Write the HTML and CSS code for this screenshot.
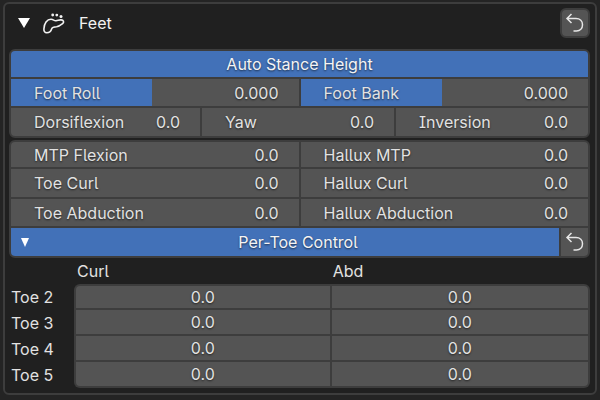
FILE: index.html
```html
<!DOCTYPE html>
<html lang="en">
<head>
<meta charset="utf-8">
<title>Feet</title>
<link rel="stylesheet" href="styles.css">
</head>
<body>
<section class="panel">
  <header class="panel-header">
    <button class="disclosure" type="button" aria-expanded="true">
      <svg class="triangle" viewBox="0 0 12 10" aria-hidden="true"><path d="M0 0H12L6 10Z"/></svg>
      <svg class="foot" viewBox="0 0 24 24" aria-hidden="true">
        <path d="M4.800 21.800C2.600 21.800 1.800 20 1.900 18C2.100 12.500 5 8.300 9 8.300C11.500 8.300 12 9.900 14 9.700C16 9.500 17 8.800 19 8.900C21.800 9.100 22.300 11.300 20.600 12.700C18.500 14.400 16.800 15.600 14.500 15.700C12.200 15.700 10.300 16 9.600 18C8.900 20.200 7.500 21.800 4.800 21.800Z"/>
        <circle cx="10.700" cy="4" r="1.400"/><circle cx="14.800" cy="4.100" r="1.400"/><circle cx="19" cy="5.600" r="1.500"/>
      </svg>
      <span>Feet</span>
    </button>
    <button class="reset boxed" type="button" aria-label="Reset feet">
      <svg class="undo" viewBox="0 0 20 20" aria-hidden="true"><path d="M6.500 1L2 5.500L6.500 10M2 5.500H11C15 5.500 17.500 8.200 17.500 11.800C17.500 15.600 15 18 11.500 18H8.500"/></svg>
    </button>
  </header>

  <div class="group group-stance">
    <button class="toggle" type="button" aria-pressed="true">Auto Stance Height</button>
    <div class="row halves">
      <label class="field slider"><span>Foot Roll</span><input type="text" value="0.000"></label>
      <label class="field slider"><span>Foot Bank</span><input type="text" value="0.000"></label>
    </div>
    <div class="row thirds">
      <label class="field"><span>Dorsiflexion</span><input type="text" value="0.0"></label>
      <label class="field"><span>Yaw</span><input type="text" value="0.0"></label>
      <label class="field"><span>Inversion</span><input type="text" value="0.0"></label>
    </div>
  </div>

  <div class="group group-toes">
    <div class="row halves">
      <label class="field"><span>MTP Flexion</span><input type="text" value="0.0"></label>
      <label class="field"><span>Hallux MTP</span><input type="text" value="0.0"></label>
    </div>
    <div class="row halves">
      <label class="field"><span>Toe Curl</span><input type="text" value="0.0"></label>
      <label class="field"><span>Hallux Curl</span><input type="text" value="0.0"></label>
    </div>
    <div class="row halves">
      <label class="field"><span>Toe Abduction</span><input type="text" value="0.0"></label>
      <label class="field"><span>Hallux Abduction</span><input type="text" value="0.0"></label>
    </div>
    <div class="row with-reset">
      <button class="toggle expander" type="button" aria-expanded="true">
        <svg class="small-triangle" viewBox="0 0 8 9" aria-hidden="true"><path d="M0 0H8L4 9Z"/></svg>
        <span>Per-Toe Control</span>
      </button>
      <button class="reset" type="button" aria-label="Reset toes">
        <svg class="undo" viewBox="0 0 20 20" aria-hidden="true"><path d="M6.500 1L2 5.500L6.500 10M2 5.500H11C15 5.500 17.500 8.200 17.500 11.800C17.500 15.600 15 18 11.500 18H8.500"/></svg>
      </button>
    </div>
  </div>

  <table class="toes">
    <colgroup><col class="col-name"><col class="col-curl"><col></colgroup>
    <thead>
      <tr><td></td><th scope="col">Curl</th><th scope="col">Abd</th></tr>
    </thead>
    <tbody>
      <tr><th scope="row">Toe 2</th><td><input type="text" aria-label="Toe 2 curl" value="0.0"></td><td><input type="text" aria-label="Toe 2 abd" value="0.0"></td></tr>
      <tr><th scope="row">Toe 3</th><td><input type="text" aria-label="Toe 3 curl" value="0.0"></td><td><input type="text" aria-label="Toe 3 abd" value="0.0"></td></tr>
      <tr><th scope="row">Toe 4</th><td><input type="text" aria-label="Toe 4 curl" value="0.0"></td><td><input type="text" aria-label="Toe 4 abd" value="0.0"></td></tr>
      <tr><th scope="row">Toe 5</th><td><input type="text" aria-label="Toe 5 curl" value="0.0"></td><td><input type="text" aria-label="Toe 5 abd" value="0.0"></td></tr>
    </tbody>
  </table>
</section>
</body>
</html>
```
FILE: styles.css
```css
:root {
  --page: #242424;
  --panel: #202020;
  --line: #3d3d3d;
  --field: #545454;
  --accent: #4271b8;
  --text: #e2e2e2;
}

* {
  box-sizing: border-box;
}

body {
  margin: 0;
  padding: 2px 3px;
  background: var(--page);
  color: var(--text);
  font: 16px/20px Inter, "Liberation Sans", sans-serif;
  font-feature-settings: "cv05", "cv08";
}

button,
input {
  margin: 0;
  padding: 0;
  border: 0;
  background: none;
  color: inherit;
  font: inherit;
  font-feature-settings: inherit;
  text-shadow: inherit;
}

.panel {
  padding: 0 5px 5px 4px;
  border: 2px solid var(--line);
  border-radius: 6px;
  background: var(--panel);
}

.panel-header {
  display: flex;
  align-items: center;
  justify-content: space-between;
  height: 38px;
  margin-bottom: 7px;
}

.disclosure {
  display: flex;
  align-items: center;
  padding-left: 9px;
  color: #f2f2f2;
}

.triangle {
  width: 12px;
  height: 10px;
  fill: #fff;
}

.foot {
  width: 24px;
  height: 24px;
  margin: 0 13px 0 12px;
  fill: none;
  stroke: #f2f2f2;
  stroke-width: 1.6;
}

.foot circle {
  fill: #f2f2f2;
  stroke: none;
}

.reset {
  display: flex;
  align-items: center;
  justify-content: center;
  background: var(--field);
}

.boxed {
  width: 30px;
  height: 30px;
  border: 2px solid var(--line);
  border-radius: 6px;
}

.undo {
  width: 20px;
  height: 20px;
  fill: none;
  stroke: #e6e6e6;
  stroke-width: 1.5;
}

.group {
  display: grid;
  gap: 2px;
  margin-bottom: 2px;
  border: 2px solid var(--line);
  border-radius: 6px;
  background: var(--line);
  overflow: hidden;
  text-shadow: 0 1px 2px rgba(0, 0, 0, 0.6);
}

.group-stance {
  grid-template-rows: 26px 27px 28px;
}

.group-toes {
  grid-template-rows: 25px 28px 27px 28px;
}

.row {
  display: grid;
  gap: 2px;
}

.halves {
  grid-template-columns: 1fr 1fr;
}

.thirds {
  grid-template-columns: 189fr 192fr 192fr;
}

.with-reset {
  grid-template-columns: 1fr 27px;
}

.toggle {
  background: var(--accent);
  color: #f4f4f4;
}

.field {
  display: flex;
  align-items: center;
  justify-content: space-between;
  min-width: 0;
  padding: 0 20px 0 23px;
  background: var(--field);
}

.field input {
  width: 52px;
  text-align: right;
}

.slider {
  background: linear-gradient(to right, var(--accent) 49%, var(--field) 49%);
}

.expander {
  display: grid;
  grid-template-columns: 8px 1fr;
  gap: 8px;
  align-items: center;
  padding-left: 10px;
}

.small-triangle {
  width: 8px;
  height: 9px;
  fill: #fff;
}

.toes {
  width: 100%;
  table-layout: fixed;
  border-spacing: 0;
}

.col-name {
  width: 65px;
}

.col-curl {
  width: 44%;
}

.toes th,
.toes td {
  padding: 0;
  font-weight: 400;
  text-align: left;
}

.toes thead th {
  height: 24px;
  padding: 0 0 2px 3px;
}

.toes tbody th {
  padding-left: 2px;
}

.toes tbody td {
  height: 26px;
  border-left: 2px solid var(--line);
  border-bottom: 2px solid var(--line);
  background: var(--field);
  text-shadow: 0 1px 2px rgba(0, 0, 0, 0.6);
}

.toes tbody td:last-child {
  border-right: 2px solid var(--line);
}

.toes tbody tr:first-child td {
  border-top: 2px solid var(--line);
}

.toes tbody tr:first-child td:nth-child(2) {
  border-top-left-radius: 6px;
}

.toes tbody tr:first-child td:last-child {
  border-top-right-radius: 6px;
}

.toes tbody tr:last-child td:nth-child(2) {
  border-bottom-left-radius: 6px;
}

.toes tbody tr:last-child td:last-child {
  border-bottom-right-radius: 6px;
}

.toes input {
  display: block;
  width: 100%;
  text-align: center;
}
```
